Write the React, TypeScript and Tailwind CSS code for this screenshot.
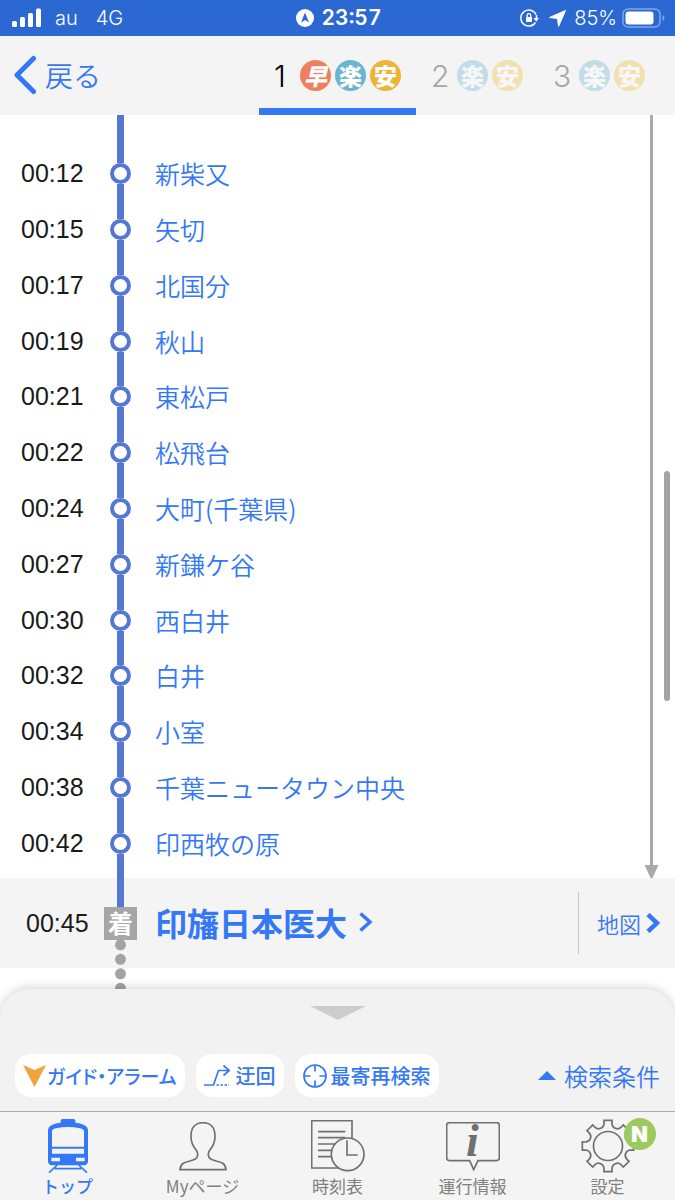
import React from "react";

type Stop = { time: string; name: string };

const stops: Stop[] = [
  { time: "00:12", name: "新柴又" },
  { time: "00:15", name: "矢切" },
  { time: "00:17", name: "北国分" },
  { time: "00:19", name: "秋山" },
  { time: "00:21", name: "東松戸" },
  { time: "00:22", name: "松飛台" },
  { time: "00:24", name: "大町(千葉県)" },
  { time: "00:27", name: "新鎌ケ谷" },
  { time: "00:30", name: "西白井" },
  { time: "00:32", name: "白井" },
  { time: "00:34", name: "小室" },
  { time: "00:38", name: "千葉ニュータウン中央" },
  { time: "00:42", name: "印西牧の原" },
];

function StatusBar() {
  return (
    <div className="grid h-9 shrink-0 grid-cols-[1fr_auto_1fr] items-center bg-[#2b68d2] pr-[10px] pl-3 font-['Inter',sans-serif] text-xl text-white">
      <div className="flex items-center font-light">
        <svg className="h-5 w-[30px]" viewBox="0 0 30 20" fill="currentColor" aria-hidden="true">
          <rect x="0" y="13" width="5" height="6" rx="1.5" />
          <rect x="8" y="9" width="5" height="10" rx="1.5" />
          <rect x="16" y="5" width="5" height="14" rx="1.5" />
          <rect x="24" y="0.5" width="5" height="18.500" rx="1.5" />
        </svg>
        <span className="ml-[13px]">au</span>
        <span className="ml-[18px]">4G</span>
      </div>
      <div className="flex items-center gap-2">
        <svg className="size-[18px]" viewBox="0 0 18 18" aria-hidden="true">
          <circle cx="9" cy="9" r="9" fill="#fff" />
          <path d="M9 3.500 13 13.500 9 11 5 13.500Z" fill="#2b68d2" />
        </svg>
        <span className="text-[21px] font-semibold tabular-nums">23:57</span>
      </div>
      <div className="flex items-center justify-end font-light">
        <svg className="h-[18px] w-5" viewBox="0 0 20 18" fill="none" stroke="currentColor" strokeWidth="1.500" aria-hidden="true">
          <path d="M16 5.500A8 8 0 1 0 15.500 13.500" />
          <path d="M16.500 6v3.500" />
          <path d="M13.500 9h5.500l-2.700 3.800Z" fill="currentColor" stroke="none" />
          <rect x="6" y="8" width="6" height="5" rx=".8" fill="currentColor" stroke="none" />
          <path d="M7.200 8V6.500a1.800 1.800 0 0 1 3.600 0V8" strokeWidth="1.300" />
        </svg>
        <svg className="ml-[9px] size-[17px]" viewBox="0 0 17 17" fill="currentColor" aria-hidden="true">
          <path d="M16.500.5 9.500 16.500 8.500 8.500.5 7.500Z" stroke="currentColor" strokeLinejoin="round" />
        </svg>
        <span className="ml-2">85%</span>
        <svg className="ml-[5px] h-5 w-[43px]" viewBox="0 0 43 20" aria-hidden="true">
          <rect x="1" y="1" width="37" height="18" rx="5" fill="none" stroke="#7fa6e8" strokeWidth="1.500" />
          <rect x="3.500" y="3.500" width="28" height="13" rx="3" fill="#fff" />
          <path d="M40.500 7v6q2-.8 2-3t-2-3Z" fill="#7fa6e8" />
        </svg>
      </div>
    </div>
  );
}

function Badge({ char, color, slanted = false }: { char: string; color: string; slanted?: boolean }) {
  return (
    <span className={`flex size-[31px] items-center justify-center rounded-full pb-px text-[23px] leading-none font-black text-white ${color}`}>
      <span className={slanted ? "italic" : ""}>{char}</span>
    </span>
  );
}

function RouteTab({ label, active = false, children }: { label: string; active?: boolean; children: React.ReactNode }) {
  return (
    <button
      type="button"
      role="tab"
      aria-selected={active}
      className={`flex items-center border-b-[7px] px-[15px] pt-[7px] ${active ? "border-[#3478f6] text-black" : "border-transparent text-[#a5a5a5]"}`}
    >
      <span className="w-[26px] text-left font-['Inter',sans-serif] text-[30px] leading-none font-light">{label}</span>
      <span className={`flex gap-1 ${active ? "" : "opacity-35"}`}>{children}</span>
    </button>
  );
}

function TopBar() {
  return (
    <header className="flex h-[79px] shrink-0 justify-between bg-[#f4f4f4] pr-[15px] pl-[14px]">
      <button type="button" className="flex items-center gap-[9px] pb-[2px] text-[28px] font-[350] text-[#3478f6]">
        <svg className="h-10 w-[22px]" viewBox="0 0 22 40" fill="none" stroke="currentColor" strokeWidth="5" strokeLinecap="round" strokeLinejoin="round" aria-hidden="true">
          <path d="M19.500 3.500 3 20l16.500 16.500" />
        </svg>
        戻る
      </button>
      <div role="tablist" className="flex">
        <RouteTab label="1" active>
          <Badge char="早" color="bg-[#ee805f]" slanted />
          <Badge char="楽" color="bg-[#6bb5d2]" />
          <Badge char="安" color="bg-[#efb335]" />
        </RouteTab>
        <RouteTab label="2">
          <Badge char="楽" color="bg-[#6bb5d2]" />
          <Badge char="安" color="bg-[#efc035]" />
        </RouteTab>
        <RouteTab label="3">
          <Badge char="楽" color="bg-[#6bb5d2]" />
          <Badge char="安" color="bg-[#efc035]" />
        </RouteTab>
      </div>
    </header>
  );
}

function StopRow({ stop }: { stop: Stop }) {
  return (
    <li className="flex min-h-12 flex-1 items-stretch leading-none">
      <time className="flex w-[110px] items-center pl-[21px] font-['Liberation_Sans',sans-serif] text-[25px] text-[#1a1a1a]">{stop.time}</time>
      <span className="flex w-[21px] flex-col items-center">
        <span className="w-[7px] flex-1 bg-[#5577d4]" />
        <span className="size-[21px] rounded-full border-[4px] border-[#5577d4] bg-white" />
        <span className="w-[7px] flex-1 bg-[#5577d4]" />
      </span>
      <a href="#station" className="ml-6 flex items-center text-[25px] font-[350] text-[#3478f6]">
        {stop.name}
      </a>
    </li>
  );
}

function LineSpacer({ height }: { height: string }) {
  return (
    <div className={`flex w-[241px] shrink-0 justify-center ${height}`}>
      <span className="w-[7px] bg-[#5577d4]" />
    </div>
  );
}

function StopList() {
  return (
    <section className="relative flex flex-1 bg-white pr-4">
      <div className="flex flex-1 flex-col">
        <LineSpacer height="h-[31px]" />
        <ul className="flex flex-1 flex-col">
          {stops.map((stop) => (
            <StopRow key={stop.time} stop={stop} />
          ))}
        </ul>
        <LineSpacer height="h-[7px]" />
      </div>
      <div className="flex w-[15px] flex-col items-center text-[#aaaaaa]">
        <span className="w-[3px] flex-1 bg-current" />
        <svg className="h-[13px] w-[15px]" viewBox="0 0 15 13" fill="currentColor" aria-hidden="true">
          <path d="M.5 0h14L8.500 13h-2Z" />
        </svg>
      </div>
      <span className="absolute top-[356px] right-[5px] h-[230px] w-[6px] rounded-full bg-[#a3a3a3]" />
    </section>
  );
}

function Arrival() {
  return (
    <section className="flex h-[90px] shrink-0 bg-[#f4f4f4] text-[#3478f6]">
      <time className="flex w-[104px] items-center pl-[26px] font-['Liberation_Sans',sans-serif] text-[25px] leading-none text-[#1a1a1a]">00:45</time>
      <div className="relative flex w-[33px] flex-col items-center">
        <span className="w-[7px] flex-1 bg-[#5577d4]" />
        <span className="flex size-[33px] items-center justify-center bg-[#a6a6a6] pb-[2px] text-[25px] leading-none font-bold text-white">着</span>
        <span className="flex-1" />
        <svg className="absolute top-[61px] h-[56px] w-[11px]" viewBox="0 0 11 56" aria-hidden="true">
          <path d="M5.500 5.800V52" stroke="#a3a3a3" strokeWidth="11" strokeLinecap="round" strokeDasharray="0 14.500" />
        </svg>
      </div>
      <a href="#station" className="ml-[18px] flex flex-1 items-center pb-[2px] text-[32px] leading-none font-bold">
        印旛日本医大
        <svg className="ml-3 h-5 w-[14px]" viewBox="0 0 14 20" fill="none" stroke="currentColor" strokeWidth="3.500" aria-hidden="true">
          <path d="M1.500 1.500 11 10l-9.500 8.500" />
        </svg>
      </a>
      <a href="#map" className="my-[14px] flex items-center border-l border-[#c4c4c4] pr-[15px] pb-px pl-[18px] text-[22px] leading-none font-[350]">
        地図
        <svg className="ml-[5px] h-5 w-[14px]" viewBox="0 0 14 20" fill="none" stroke="currentColor" strokeWidth="4.500" aria-hidden="true">
          <path d="M2 1.500 11 10l-9 8.500" />
        </svg>
      </a>
    </section>
  );
}

function Pill({ icon, children }: { icon: React.ReactNode; children: React.ReactNode }) {
  return (
    <button type="button" className="flex h-[43px] items-center rounded-[16px] bg-white px-2 text-xl leading-none font-medium text-[#3478f6]">
      {icon}
      {children}
    </button>
  );
}

function Sheet() {
  return (
    <section className="relative h-[122px] shrink-0 rounded-t-[30px] bg-[#f2f2f3] shadow-[0_-2px_10px_rgba(0,0,0,0.16)]">
      <button type="button" aria-label="閉じる" className="mx-auto flex h-[65px] w-20 justify-center pt-[17px]">
        <svg className="h-[14px] w-14" viewBox="0 0 56 14" aria-hidden="true">
          <path d="M0 0h56L28 14Z" fill="#cdcdcd" />
        </svg>
      </button>
      <div className="flex items-center gap-[11px] pr-[15px] pl-[15px]">
        <Pill
          icon={
            <svg className="mr-[1px] h-[22px] w-[23px]" viewBox="0 0 23 22" aria-hidden="true">
              <path d="M0 0 11.500 5 23 0 11.500 22Z" fill="#f0a53c" />
            </svg>
          }
        >
          <span className="text-[19px] [font-feature-settings:'palt']">ガイド・アラーム</span>
        </Pill>
        <Pill
          icon={
            <svg className="mr-[6px] h-[22px] w-[26px]" viewBox="0 0 26 22" fill="none" stroke="currentColor" strokeWidth="1.700" aria-hidden="true">
              <path d="M0 20h9.500L14.500 5.500H25M19.500.500 25.300 5.500l-5.800 5" />
              <path d="M12.500 20h12.500" strokeDasharray="2.500 1.500" />
            </svg>
          }
        >
          迂回
        </Pill>
        <Pill
          icon={
            <svg className="mr-1 size-6" viewBox="0 0 24 24" fill="none" stroke="currentColor" strokeWidth="1.700" aria-hidden="true">
              <circle cx="12" cy="12" r="11" />
              <path d="M12 1v6.500M12 16.500V23M1 12h6.500M16.500 12H23" />
            </svg>
          }
        >
          最寄再検索
        </Pill>
        <button type="button" className="ml-auto flex items-center gap-2 text-2xl leading-none font-[350] text-[#3478f6]">
          <svg className="h-[9px] w-[18px]" viewBox="0 0 18 9" fill="currentColor" aria-hidden="true">
            <path d="M0 9 9 0l9 9Z" />
          </svg>
          検索条件
        </button>
      </div>
    </section>
  );
}

function TrainIcon() {
  return (
    <svg className="h-[54px] w-10" viewBox="0 0 120 162" aria-hidden="true">
      <path d="M38 11V5q0-5 5-5h34q5 0 5 5v6c16 2 28 5 35 14q3 4 3 9v92q0 12-12 13H12Q0 138 0 126V34q0-5 3-9c7-9 19-12 35-14Z" fill="#3478f6" />
      <path d="M12 83V38q0-8 12-10 36-8 72 0 12 2 12 10v45ZM12 89h96v15H12ZM10 116h26v11H10ZM84 116h26v11H84Z" fill="#f4f4f4" />
      <path d="M28 138 3 161M92 138l25 23M20 149h80" stroke="#3478f6" strokeWidth="5" fill="none" />
    </svg>
  );
}

function PersonIcon() {
  return (
    <svg className="h-[49px] w-12" viewBox="-2 -1 144 147" fill="none" stroke="currentColor" strokeWidth="5" aria-hidden="true">
      <path d="M70 1c22 0 36 14 36 41 0 20-7 31-14 39-9 10-8 24 2 30 14 8 44 3 45 31H1c1-28 31-23 45-31 10-6 11-20 2-30-7-8-14-19-14-39C34 15 48 1 70 1Z" />
    </svg>
  );
}

function TimetableIcon() {
  return (
    <svg className="h-[52px] w-[54px]" viewBox="-1 -1 162 156" fill="none" stroke="currentColor" strokeWidth="5" aria-hidden="true">
      <path d="M1 1h121v142H1ZM20 34h82M20 52h82M20 71h60M20 90h50M20 109h50" />
      <circle cx="109" cy="102" r="49" fill="#f4f4f4" />
      <path d="M107 60v44h32" />
    </svg>
  );
}

function InfoIcon() {
  return (
    <span className="relative block h-[49px] w-[54px]">
      <svg className="size-full" viewBox="-1 -1 162 147" fill="none" stroke="currentColor" strokeWidth="5" aria-hidden="true">
        <path d="M9 1h142q8 0 8 8v98q0 8-8 8H95L82 142 70 115H9q-8 0-8-8V9q0-8 8-8Z" />
      </svg>
      <span className="absolute inset-x-0 top-0 text-center font-['Liberation_Serif',serif] text-[46px] leading-[38px] font-bold italic">i</span>
    </span>
  );
}

function gearPath(): string {
  const at = (r: number, deg: number) => {
    const a = ((deg - 90) * Math.PI) / 180;
    return `${(80 + r * Math.cos(a)).toFixed(1)} ${(80 + r * Math.sin(a)).toFixed(1)}`;
  };
  let d = "";
  for (let i = 0; i < 8; i++) {
    const c = i * 45;
    d += `${i === 0 ? "M" : "L"}${at(77, c - 9)}L${at(77, c + 9)}L${at(68, c + 10)}A16 16 0 0 0 ${at(68, c + 35)}`;
  }
  return d + "Z";
}

function GearIcon() {
  return (
    <svg className="size-[54px]" viewBox="0 0 160 160" fill="none" stroke="currentColor" strokeWidth="5" aria-hidden="true">
      <path d={gearPath()} />
      <circle cx="80" cy="80" r="43" />
    </svg>
  );
}

function NavItem({ label, icon, active = false, badge }: { label: string; icon: React.ReactNode; active?: boolean; badge?: string }) {
  return (
    <a
      href="#tab"
      aria-current={active ? "page" : undefined}
      className={`relative flex flex-1 flex-col items-center pt-[7px] ${active ? "text-[#3478f6]" : "text-[#707070]"}`}
    >
      <span className="flex h-[54px] items-center">{icon}</span>
      <span className={`mt-[3px] text-[17px] leading-5 ${active ? "font-medium" : "text-[#808080]"}`}>{label}</span>
      {badge && (
        <span className="absolute top-[6px] left-1/2 ml-4 flex size-8 items-center justify-center rounded-full bg-[#9dc961] font-['Inter',sans-serif] text-[22px] leading-none font-black text-white">
          {badge}
        </span>
      )}
    </a>
  );
}

function BottomNav() {
  return (
    <nav className="relative flex h-[89px] shrink-0 border-t border-[#a9a9a9] bg-[#f4f4f4]">
      <NavItem label="トップ" icon={<TrainIcon />} active />
      <NavItem label="Myページ" icon={<PersonIcon />} />
      <NavItem label="時刻表" icon={<TimetableIcon />} />
      <NavItem label="運行情報" icon={<InfoIcon />} />
      <NavItem label="設定" icon={<GearIcon />} badge="N" />
    </nav>
  );
}

export default function App() {
  return (
    <div lang="ja" className="flex min-h-screen flex-col bg-white font-['Noto_Sans_CJK_JP',sans-serif]">
      <StatusBar />
      <TopBar />
      <main className="flex flex-1 flex-col pb-[21px]">
        <StopList />
        <Arrival />
      </main>
      <Sheet />
      <BottomNav />
    </div>
  );
}
